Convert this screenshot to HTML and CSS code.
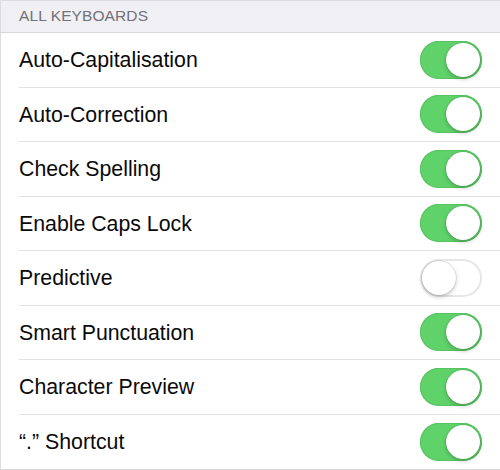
FILE: index.html
```html
<!DOCTYPE html>
<html>
<head>
<meta charset="utf-8">
<link rel="stylesheet" href="styles.css">
</head>
<body>
<div class="screen">
  <div class="section-header">ALL KEYBOARDS</div>
  <ul class="list">
    <li class="row"><span class="label">Auto-Capitalisation</span><span class="switch on"><span class="knob"></span></span></li>
    <li class="row"><span class="label">Auto-Correction</span><span class="switch on"><span class="knob"></span></span></li>
    <li class="row"><span class="label">Check Spelling</span><span class="switch on"><span class="knob"></span></span></li>
    <li class="row"><span class="label">Enable Caps Lock</span><span class="switch on"><span class="knob"></span></span></li>
    <li class="row"><span class="label">Predictive</span><span class="switch off"><span class="knob"></span></span></li>
    <li class="row"><span class="label">Smart Punctuation</span><span class="switch on"><span class="knob"></span></span></li>
    <li class="row"><span class="label">Character Preview</span><span class="switch on"><span class="knob"></span></span></li>
    <li class="row"><span class="label">“.” Shortcut</span><span class="switch on"><span class="knob"></span></span></li>
  </ul>
</div>
</body>
</html>
```
FILE: styles.css
```css
* { box-sizing: border-box; }
html, body { margin: 0; padding: 0; }
body {
  width: 500px;
  height: 470px;
  overflow: hidden;
  background: #efeff4;
  font-family: "Liberation Sans", Arial, sans-serif;
}
.screen {
  border-left: 1px solid #dcdce0;
  height: 470px;
}
.section-header {
  height: 33px;
  border-top: 1px solid #dcdce0;
  border-bottom: 1px solid #d8d8dc;
  padding: 6px 0 0 18px;
  font-size: 15.5px;
  color: #727277;
  letter-spacing: 0.1px;
}
.list {
  list-style: none;
  margin: 0;
  padding: 0 0 0 18px;
  background: #fff;
  border-bottom: 1px solid #d8d8dc;
}
.row {
  height: 54.5px;
  display: flex;
  align-items: center;
  justify-content: space-between;
  padding-right: 18px;
  border-bottom: 1px solid #e2e2e6;
}
.row:last-child { border-bottom: none; }
.label {
  font-size: 21.3px;
  color: #0a0a0a;
  padding-top: 2px;
}
.switch {
  width: 62px;
  height: 38px;
  border-radius: 19px;
  position: relative;
  flex: none;
}
.switch.on {
  background: #5fd26a;
  box-shadow: inset 0 0 0 1px #55c460;
}
.switch.off {
  background: #fff;
  box-shadow: inset 0 0 0 2px #e6e6e6;
}
.knob {
  position: absolute;
  top: 2px;
  width: 34px;
  height: 34px;
  border-radius: 50%;
  background: #fff;
  box-shadow: 0 2px 4px rgba(0,0,0,0.22), 0 0 0 0.5px rgba(0,0,0,0.15);
}
.switch.on .knob { right: 2px; }
.switch.off .knob { left: 2px; }
```
